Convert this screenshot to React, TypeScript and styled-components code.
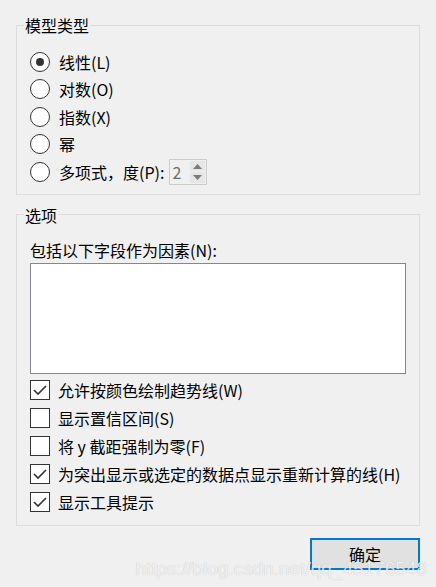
import React from 'react';
import styled, { createGlobalStyle } from 'styled-components';

const GlobalStyle = createGlobalStyle`
  html, body {
    margin: 0;
    padding: 0;
    background: #f0f0f0;
  }
  body {
    font-family: "Noto Sans CJK SC", "Liberation Sans", sans-serif;
    font-size: 16px;
    color: #000;
  }
`;

const Dialog = styled.div`
  position: relative;
  width: 436px;
  height: 587px;
  box-sizing: border-box;
  padding: 15px 16px 0 16px;
  background: #f0f0f0;
  overflow: hidden;
`;

const GroupBox = styled.fieldset<{ $gap?: number }>`
  margin: ${p => p.$gap ?? 0}px 0 0 0;
  padding: 0;
  border: 1px solid #dcdcdc;
  min-width: 0;
`;

const GroupBody = styled.div<{ $top: number; $bottom: number }>`
  padding: ${p => p.$top}px 0 ${p => p.$bottom}px 13px;
  display: flex;
  flex-direction: column;
`;

const Legend = styled.legend`
  margin-left: 7px;
  padding: 0 1px;
  line-height: 20px;
  font-size: 16px;
`;

const OptionRow = styled.label<{ $h: number }>`
  display: flex;
  align-items: center;
  height: ${p => p.$h}px;
  line-height: 20px;
  white-space: nowrap;
`;

const RadioCircle = styled.span<{ $on?: boolean }>`
  width: 20px;
  height: 20px;
  box-sizing: border-box;
  border: 1px solid #333;
  border-radius: 50%;
  background: #fff;
  margin-right: 9px;
  display: flex;
  align-items: center;
  justify-content: center;
  flex-shrink: 0;

  &::after {
    content: '';
    width: 8px;
    height: 8px;
    border-radius: 50%;
    background: #333;
    display: ${p => (p.$on ? 'block' : 'none')};
  }
`;

const CheckBox = styled.span`
  width: 20px;
  height: 20px;
  box-sizing: border-box;
  border: 1px solid #333;
  background: #fff;
  margin-right: 8px;
  display: flex;
  align-items: center;
  justify-content: center;
  flex-shrink: 0;
`;

const Spinner = styled.div`
  display: flex;
  width: 38px;
  height: 26px;
  box-sizing: border-box;
  border: 1px solid #cccccc;
  background: #f0f0f0;
  margin-left: 5px;
`;

const SpinValue = styled.span`
  flex: 1;
  color: #6d6d6d;
  padding-left: 2px;
  line-height: 24px;
`;

const SpinButtons = styled.div`
  width: 15px;
  display: flex;
  flex-direction: column;
  padding: 1px 1px 1px 0;
  gap: 1px;
`;

const SpinButton = styled.div`
  flex: 1;
  background: #e6e6e6;
  display: flex;
  align-items: center;
  justify-content: center;
`;

const FieldLabel = styled.div`
  line-height: 20px;
`;

const ListBox = styled.div`
  width: 376px;
  height: 111px;
  box-sizing: border-box;
  border: 1px solid #828790;
  background: #fff;
  margin: 3px 0 2px 0;
`;

const Footer = styled.div`
  display: flex;
  justify-content: flex-end;
  margin-top: 12px;
`;

const Button = styled.button`
  width: 110px;
  height: 32px;
  box-sizing: border-box;
  border: 2px solid #0078d7;
  background: #e1e1e1;
  font-family: inherit;
  font-size: 16px;
  color: #000;
  padding: 0;
`;

const Watermark = styled.div`
  position: absolute;
  right: 9px;
  top: 559px;
  font-family: "Liberation Sans", Arial, sans-serif;
  font-size: 19px;
  line-height: 20px;
  color: rgba(255, 255, 255, 0.8);
  text-shadow: 0 0 1px rgba(0, 0, 0, 0.25);
  pointer-events: none;
  white-space: nowrap;
`;

const Arrow = ({ up }: { up?: boolean }) => (
  <svg width="9" height="5" viewBox="0 0 9 5">
    <path d={up ? 'M0 5 L4.5 0 L9 5 Z' : 'M0 0 L4.5 5 L9 0 Z'} fill="#7a7a7a" />
  </svg>
);

const Check = () => (
  <svg width="14" height="12" viewBox="0 0 14 12">
    <path d="M1 6 L5 10 L13 2" fill="none" stroke="#333" strokeWidth="1.6" />
  </svg>
);

const radios = ['线性(L)', '对数(O)', '指数(X)', '幂'];

const checks = [
  { text: '允许按颜色绘制趋势线(W)', on: true },
  { text: '显示置信区间(S)', on: false },
  { text: '将 y 截距强制为零(F)', on: false },
  { text: '为突出显示或选定的数据点显示重新计算的线(H)', on: true },
  { text: '显示工具提示', on: true },
];

export default function App() {
  return (
    <>
      <GlobalStyle />
      <Dialog>
        <GroupBox>
          <Legend>模型类型</Legend>
          <GroupBody $top={13} $bottom={8}>
            {radios.map((r, i) => (
              <OptionRow key={r} $h={27.5}>
                <RadioCircle $on={i === 0} />
                {r}
              </OptionRow>
            ))}
            <OptionRow $h={27.5}>
              <RadioCircle />
              多项式，度(P):
              <Spinner>
                <SpinValue>2</SpinValue>
                <SpinButtons>
                  <SpinButton>
                    <Arrow up />
                  </SpinButton>
                  <SpinButton>
                    <Arrow />
                  </SpinButton>
                </SpinButtons>
              </Spinner>
            </OptionRow>
          </GroupBody>
        </GroupBox>

        <GroupBox $gap={10}>
          <Legend>选项</Legend>
          <GroupBody $top={15} $bottom={9}>
            <FieldLabel>包括以下字段作为因素(N):</FieldLabel>
            <ListBox />
            {checks.map(c => (
              <OptionRow key={c.text} $h={28}>
                <CheckBox>{c.on && <Check />}</CheckBox>
                {c.text}
              </OptionRow>
            ))}
          </GroupBody>
        </GroupBox>

        <Footer>
          <Button>确定</Button>
        </Footer>
        <Watermark>https://blog.csdn.net/qq_45176548</Watermark>
      </Dialog>
    </>
  );
}
